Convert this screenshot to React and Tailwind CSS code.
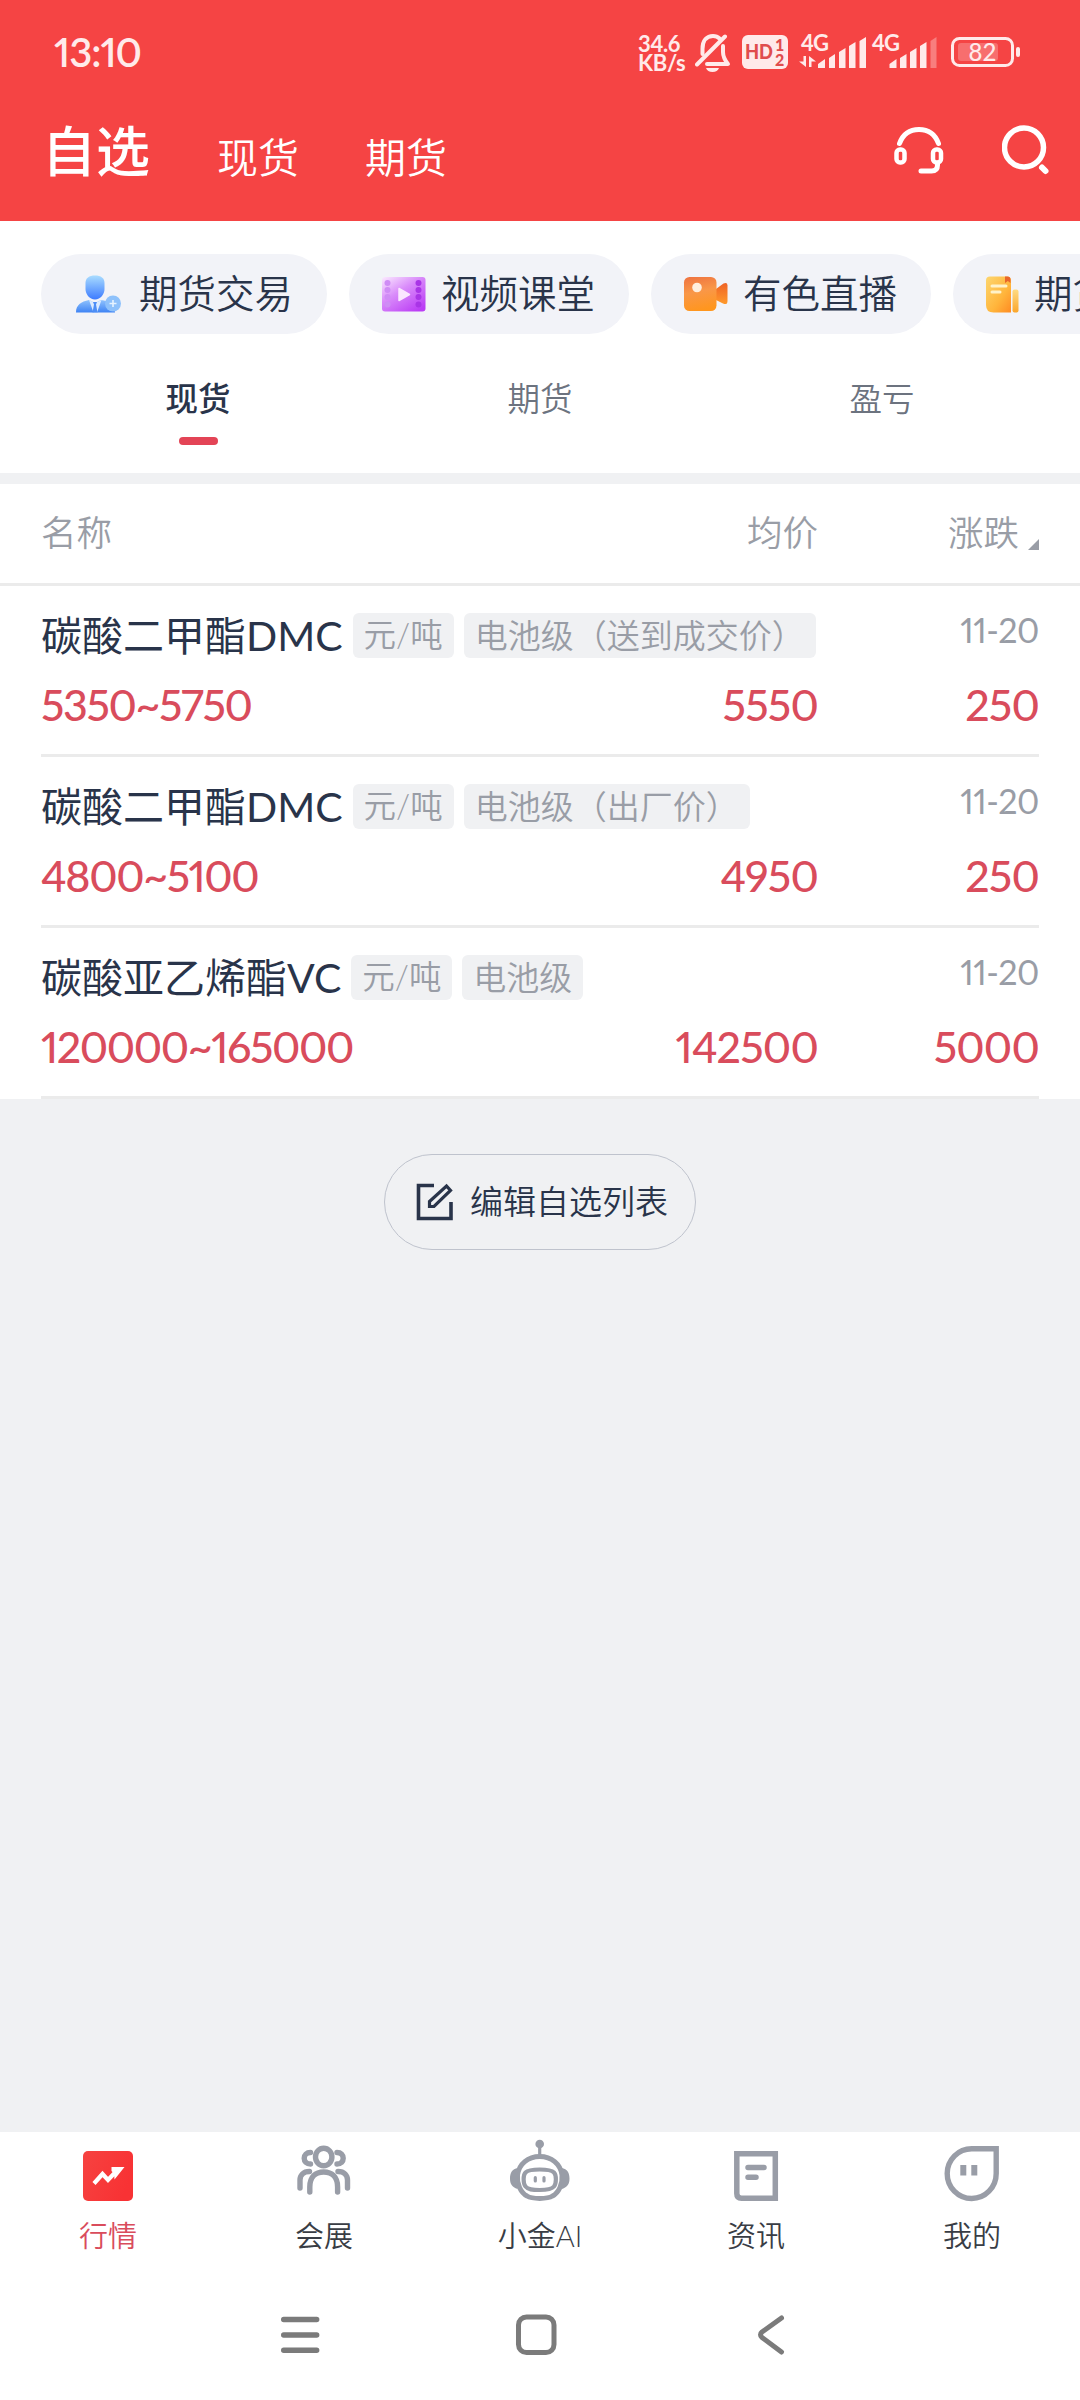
const shortcuts = [
  { label: '期货交易', Icon: TraderIcon, width: 'w-[286px] pl-[34px] gap-[17px]' },
  { label: '视频课堂', Icon: FilmIcon, width: 'w-[280px] pl-[32px] gap-[14px]' },
  { label: '有色直播', Icon: CameraIcon, width: 'w-[280px] pl-[32px] gap-[14px]' },
  { label: '期货资讯', Icon: BookIcon, width: 'w-[280px] pl-[32px] gap-[13px]' },
];

const rows = [
  { name: '碳酸二甲酯DMC', unit: '元/吨', grade: '电池级（送到成交价）', date: '11-20', range: '5350~5750', avg: '5550', change: '250' },
  { name: '碳酸二甲酯DMC', unit: '元/吨', grade: '电池级（出厂价）', date: '11-20', range: '4800~5100', avg: '4950', change: '250' },
  { name: '碳酸亚乙烯酯VC', unit: '元/吨', grade: '电池级', date: '11-20', range: '120000~165000', avg: '142500', change: '5000' },
];

const navItems = [
  { label: '行情', Icon: MarketIcon, active: true },
  { label: '会展', Icon: PeopleIcon },
  { label: '小金AI', Icon: RobotIcon },
  { label: '资讯', Icon: NewsIcon },
  { label: '我的', Icon: MineIcon },
];

function TraderIcon() {
  return (
    <svg className="w-[47px] h-[40px] shrink-0" viewBox="0 0 47 40">
      <defs>
        <linearGradient id="trader-head" x1="0" y1="0" x2="0" y2="1">
          <stop offset="0" stopColor="#a9dcff" />
          <stop offset="1" stopColor="#3d7bff" />
        </linearGradient>
        <linearGradient id="trader-body" x1="0" y1="0" x2="0" y2="1">
          <stop offset="0" stopColor="#8fc2fd" />
          <stop offset="1" stopColor="#3f83f4" />
        </linearGradient>
      </defs>
      <path d="M10.500 9C10.500 4 14 1.500 20 1.500S29.500 4 29.500 9v6c0 5-4 10.500-9.500 10.500S10.500 20 10.500 15z" fill="url(#trader-head)" />
      <path d="M1 38.500C1 31 6 27.500 14 26l6 3 6-3c8 1 13 4 14 12.500z" fill="url(#trader-body)" />
      <path d="M14 26l4.500 12.500h3.500L26.500 26 20 29z" fill="#dcebff" />
      <path d="M18 28h4l-1 2.500 1.500 8h-5l1.500-8z" fill="#4d8ef6" />
      <circle cx="38" cy="29.500" r="8" fill="#8ec1fb" />
      <path d="M38 26v7M34.500 29.500h7" stroke="#e6f3ff" strokeWidth="1.600" />
    </svg>
  );
}

function FilmIcon() {
  return (
    <svg className="w-[46px] h-[40px] shrink-0" viewBox="0 0 46 40">
      <defs>
        <linearGradient id="film-bg" x1="0" y1="0" x2="0.800" y2="1">
          <stop offset="0" stopColor="#fbeaff" />
          <stop offset="0.450" stopColor="#d98bfa" />
          <stop offset="1" stopColor="#bb3df5" />
        </linearGradient>
      </defs>
      <rect x="1" y="3" width="43.500" height="34.500" rx="3" fill="url(#film-bg)" />
      <g fill="#cf8cf5">
        <circle cx="6.500" cy="9" r="3" />
        <circle cx="6.500" cy="16" r="3" />
        <circle cx="6.500" cy="23" r="3" />
        <circle cx="6.500" cy="30.500" r="3" />
      </g>
      <g fill="#a935e6">
        <circle cx="37.500" cy="9" r="3" />
        <circle cx="37.500" cy="16" r="3" />
        <circle cx="37.500" cy="23" r="3" />
        <circle cx="37.500" cy="30.500" r="3" />
      </g>
      <path d="M18 14.500v12l10.500-6z" fill="#fbe6ff" stroke="#fbe6ff" strokeWidth="1.500" strokeLinejoin="round" />
    </svg>
  );
}

function CameraIcon() {
  return (
    <svg className="w-[46px] h-[40px] shrink-0" viewBox="0 0 46 40">
      <defs>
        <linearGradient id="camera-body" x1="0.200" y1="0" x2="0.400" y2="1">
          <stop offset="0" stopColor="#ef7541" />
          <stop offset="0.450" stopColor="#f99748" />
          <stop offset="1" stopColor="#ff961e" />
        </linearGradient>
        <linearGradient id="camera-lens" x1="0" y1="0" x2="0" y2="1">
          <stop offset="0" stopColor="#ef6326" />
          <stop offset="1" stopColor="#ff9a2c" />
        </linearGradient>
      </defs>
      <path d="M33 15l7.500-5.500q4-1.500 4 2V27q0 4.500-4.500 2.500L33 26z" fill="url(#camera-lens)" />
      <rect x="1" y="3" width="32.500" height="34" rx="5.500" fill="url(#camera-body)" />
      <circle cx="14" cy="13.500" r="4.800" fill="#ffeedd" />
    </svg>
  );
}

function BookIcon() {
  return (
    <svg className="w-[36px] h-[40px] shrink-0" viewBox="0 0 36 40">
      <defs>
        <linearGradient id="book-cover" x1="0" y1="0" x2="1" y2="1">
          <stop offset="0" stopColor="#fdd66f" />
          <stop offset="0.600" stopColor="#ffb53c" />
          <stop offset="1" stopColor="#ff8b22" />
        </linearGradient>
        <linearGradient id="book-side" x1="0" y1="0" x2="0" y2="1">
          <stop offset="0" stopColor="#fedb83" />
          <stop offset="1" stopColor="#fba62c" />
        </linearGradient>
      </defs>
      <path d="M5 2.500h17q4 0 4 4V38.500H8.500q-7.500 0-7.500-7.500V6.500q0-4 4-4z" fill="url(#book-cover)" />
      <path d="M20 2.500h2.500q3 0 3 3V9l-2.700-2L20 9z" fill="#e8662c" />
      <path d="M7 12h14M7 18h8" stroke="#fff2c9" strokeWidth="3" strokeLinecap="round" />
      <rect x="27.500" y="15.500" width="6" height="23" rx="2" fill="url(#book-side)" />
    </svg>
  );
}

function MarketIcon() {
  return (
    <svg className="w-[64px] h-[64px]" viewBox="0 0 64 64">
      <defs>
        <linearGradient id="market-bg" x1="0" y1="0" x2="1" y2="0.400">
          <stop offset="0" stopColor="#f64240" />
          <stop offset="1" stopColor="#f83234" />
        </linearGradient>
      </defs>
      <rect x="7" y="10" width="50" height="50" rx="5" fill="url(#market-bg)" />
      <path d="M18 42.500l8.500-9.500 5.500 6 9-9.500" fill="none" stroke="#fff" strokeWidth="4.200" />
      <path d="M35.500 26H48.500l-10 12.500-.5-6-2.500-2.500z" fill="#fff" />
    </svg>
  );
}

function PeopleIcon() {
  return (
    <svg className="w-[64px] h-[64px]" viewBox="0 0 64 64" fill="none" stroke="#999da7" strokeWidth="5.400" strokeLinecap="round">
      <ellipse cx="31.700" cy="16" rx="8.200" ry="8.800" />
      <path d="M17.800 51V46C17.800 36 23.500 31 31.700 31S45.600 36 45.600 46v5" />
      <path d="M18.500 11.500C14.500 11.500 12.200 14 12.200 17.200S14.500 23 18.500 23M45 11.500c4 0 6.200 2.500 6.200 5.700S49 23 45 23" />
      <path d="M17.500 30.500C11 30.500 8 34.500 8 39v8M46 30.500c6.500 0 9.500 4 9.500 8.500v8" />
    </svg>
  );
}

function RobotIcon() {
  return (
    <svg className="w-[64px] h-[64px] overflow-visible" viewBox="0 0 64 64" fill="none" stroke="#999da7">
      <circle cx="31.700" cy="3" r="4.300" fill="#999da7" stroke="none" />
      <path d="M31.700 6v8" strokeWidth="3.200" />
      <path d="M31.700 15.500C20 15.500 11 23 9.500 34 8.500 43 13 52 19 55 24 58.200 39.500 58.200 44.500 55 50.500 52 55 43 54 34 52.500 23 43.500 15.500 31.700 15.500z" strokeWidth="5" />
      <path d="M10 27C4 28 2 32 2 37.500S4 46 9.500 48zM53.500 27C59.500 28 61.500 32 61.500 37.500S59.500 46 54 48z" fill="#999da7" stroke="none" />
      <path d="M31.700 28.500C24 28.500 20 29 17.500 31.500 15 34 15 42.500 17.500 45.500 20 48.500 24 49 31.700 49S43.500 48.500 46 45.500C48.500 42.500 48.500 34 46 31.500 43.500 29 39.500 28.500 31.700 28.500z" strokeWidth="4.200" />
      <path d="M27.300 36.700v3.300M36 36.700v3.300" strokeWidth="3.200" strokeLinecap="round" />
    </svg>
  );
}

function NewsIcon() {
  return (
    <svg className="w-[64px] h-[64px]" viewBox="0 0 64 64" fill="none" stroke="#999da7" strokeWidth="5.500">
      <path d="M12.800 12.700h38.500v44.500H17.500q-4.700 0-4.700-4.700z" />
      <path d="M24 26.500h16M24 36.300h8" strokeLinecap="round" />
    </svg>
  );
}

function MineIcon() {
  return (
    <svg className="w-[64px] h-[64px]" viewBox="0 0 64 64">
      <path d="M32 7.700h24.200V32.500A24.500 24.900 0 1 1 32 7.700z" fill="none" stroke="#999da7" strokeWidth="5.400" />
      <path d="M20.300 24h6v10.500h-6zM31.300 24h6v10.500h-6z" fill="#999da7" />
    </svg>
  );
}

function StatusBar() {
  return (
    <div className="flex h-[104px] pl-[54px] text-[#ffeaea]">
      <div className="w-[584px] pt-[28px] text-[40px] leading-[48px] font-semibold tracking-[-1px] proportional-nums">13:10</div>
      <div className="w-[57px] pt-[35px] text-[22px] leading-[18.500px] font-bold tracking-[-0.300px] whitespace-nowrap">
        34.6<br />KB/s
      </div>
      <svg className="w-[385px] h-[104px] shrink-0" viewBox="695 0 385 104">
        <g fill="none" stroke="#ffeaea" strokeWidth="4" strokeLinecap="round" strokeLinejoin="round">
          <path d="M702.500 54V49C702.500 40 707 36 713 36Q717 36 719.500 38.500" />
          <path d="M723 46v6q0 6 5 12H707" />
          <path d="M697 64.500L725 36.500" />
        </g>
        <path d="M706 68h13q-1.500 4-6.500 4t-6.500-4z" fill="#ffeaea" />
        <rect x="742" y="35" width="46" height="34" rx="6" fill="#ffeaea" />
        <g fill="#e04d4d" fontWeight="900" fontFamily="Lato, sans-serif">
          <text x="745" y="59" fontSize="20" textLength="28" lengthAdjust="spacingAndGlyphs">HD</text>
          <text x="775" y="51" fontSize="16">1</text>
          <text x="775" y="65.500" fontSize="16">2</text>
        </g>
        <g fill="#ffeaea" fontWeight="700" fontFamily="Lato, sans-serif" fontSize="22">
          <text x="801" y="50.500" textLength="28">4G</text>
          <text x="872" y="50.500" textLength="28">4G</text>
        </g>
        <g fill="#ffeaea">
          <path d="M803.500 56h2.500v11l-7-5.500h4.500zM809 67V56l7 5.500h-4.500V67z" />
          <path d="M818 64l7-5v9h-7zM829 58l6-4v14h-6zM839 52l6.500-4v20H839zM849 46l6.500-4v26H849zM859.500 41l6.500-4v31h-6.500z" />
          <path d="M889.500 64l7-5v9h-7zM900 58l6.500-4v14H900zM910 52l6.500-4v20H910zM920 46l6.500-4v26H920z" />
          <path d="M930.500 41l6-4v31h-6z" fillOpacity="0.350" />
          <rect x="958" y="43" width="40" height="18" rx="3" fillOpacity="0.250" />
          <rect x="1016" y="47" width="4" height="10" rx="2" />
        </g>
        <rect x="952.500" y="38.500" width="60" height="27" rx="7" fill="none" stroke="#ffeaea" strokeWidth="3" />
        <text x="968.500" y="61" fill="#ffeaea" fontFamily="Lato, sans-serif" fontSize="24" fontWeight="500" textLength="28">82</text>
      </svg>
    </div>
  );
}

function Header() {
  return (
    <header className="h-[221px] bg-[#f54444]">
      <StatusBar />
      <div className="flex h-[117px] pl-[42px] pr-[30px] text-white">
        <h1 className="w-[175px] pt-[8px] text-[54px] leading-[80px] font-medium">自选</h1>
        <span className="w-[148px] pt-[14px] text-[41px] leading-[80px] font-[350]">现货</span>
        <span className="pt-[14px] text-[41px] leading-[80px] font-[350]">期货</span>
        <div className="ml-auto flex gap-[55px] pt-[19px]">
          <svg className="w-[56px] h-[56px]" viewBox="0 0 56 56" fill="none" stroke="#fff" strokeWidth="5" strokeLinecap="round">
            <path d="M8.500 20.500C12 11 18 6.500 28 6.500S44 11 47.500 20.500" />
            <rect x="5.500" y="26.500" width="8" height="13" rx="3.500" strokeWidth="4.500" />
            <rect x="42" y="26.500" width="8" height="13" rx="3.500" strokeWidth="4.500" />
            <path d="M46.500 40v2q0 6-6 6H30" />
          </svg>
          <svg className="w-[48px] h-[56px]" viewBox="0 0 48 56" fill="none" stroke="#fff" strokeWidth="5.500" strokeLinecap="round">
            <circle cx="22" cy="24.500" r="19.500" />
            <path d="M40 44.500l3.500 3.500" strokeWidth="6" />
          </svg>
        </div>
      </div>
    </header>
  );
}

function Shortcuts() {
  return (
    <div className="flex gap-[22px] pt-[33px] pl-[41px] overflow-hidden">
      {shortcuts.map(({ label, Icon, width }) => (
        <a key={label} href="#" className={`${width} flex h-[80px] shrink-0 items-center rounded-full bg-[#f2f3f8] text-[38.500px] font-[350] whitespace-nowrap text-[#29344a]`}>
          <Icon />
          {label}
        </a>
      ))}
    </div>
  );
}

function Tabs() {
  return (
    <div className="grid grid-cols-3 h-[139px] px-[27px] pt-[40px] text-center text-[32.500px] leading-[50px] font-[350] text-[#6c737f]">
      <div className="flex flex-col items-center text-[#29344a] font-medium">
        现货
        <span className="mt-[13px] h-[8px] w-[39px] rounded-full bg-[#e34456]" />
      </div>
      <div>期货</div>
      <div>盈亏</div>
    </div>
  );
}

function PriceRow({ item }) {
  return (
    <div className="mx-[41px] h-[171px] border-b-[3px] border-[#ebebeb]">
      <div className="flex h-[72px] pt-[27px]">
        <span className="text-[41px] leading-[46px] text-[#29344a]">{item.name}</span>
        <span className="ml-[10px] h-[45px] w-[101px] rounded-[6px] bg-[#f0f1f3] text-center text-[32.500px] leading-[44px] font-[350] text-[#999da6]">{item.unit}</span>
        <span className="ml-[10px] h-[45px] rounded-[6px] bg-[#f0f1f3] px-[11px] text-[33px] leading-[44px] font-[350] text-[#999da6]">{item.grade}</span>
        <span className="ml-auto text-[34px] leading-[34px] tracking-[-0.5px] text-[#999da6] proportional-nums">{item.date}</span>
      </div>
      <div className="flex pt-[21px] text-[43px] leading-[52px] font-medium tracking-[-0.8px] text-[#d94c5c] proportional-nums">
        <span className="w-[500px] tracking-[-1.4px]">{item.range}</span>
        <span className="w-[277px] text-right">{item.avg}</span>
        <span className="flex-1 text-right">{item.change}</span>
      </div>
    </div>
  );
}

function PriceTable() {
  return (
    <section className="bg-white">
      <div className="flex h-[102px] border-b-[3px] border-[#ebebeb] px-[41px] text-[35.500px] leading-[98px] font-[350] text-[#999da6]">
        <span className="w-[500px]">名称</span>
        <span className="w-[277px] text-right">均价</span>
        <span className="flex flex-1 justify-end">
          涨跌
          <svg className="ml-[9px] mt-[55px] h-[11px] w-[11px]" viewBox="0 0 11 11">
            <path d="M11 0v11H0z" fill="#999da6" />
          </svg>
        </span>
      </div>
      {rows.map((item, i) => (
        <PriceRow key={i} item={item} />
      ))}
    </section>
  );
}

function BottomNav() {
  return (
    <nav className="grid h-[148px] grid-cols-5 bg-white text-[29px] font-[350] text-[#393d45]">
      {navItems.map(({ label, Icon, active }) => (
        <a key={label} href="#" className={`flex flex-col items-center pt-[9px] ${active ? 'text-[#d94c5c]' : ''}`}>
          <Icon />
          <span className="mt-[9px] leading-[44px]">{label}</span>
        </a>
      ))}
    </nav>
  );
}

function SystemNav() {
  return (
    <div className="flex h-[120px] items-start gap-[191px] bg-white pt-[31px] pl-[278px]">
      <svg className="w-[46px] h-[46px]" viewBox="0 0 46 46" stroke="#7b7b7b" strokeWidth="5.400" strokeLinecap="round">
        <path d="M5.700 8.500h33M5.700 24h33M5.700 39.200h33" />
      </svg>
      <svg className="-ml-[3px] w-[46px] h-[46px]" viewBox="0 0 46 46" fill="none" stroke="#7b7b7b" strokeWidth="5">
        <rect x="6.500" y="6" width="35.500" height="35.500" rx="8" />
      </svg>
      <svg className="w-[46px] h-[46px]" viewBox="0 0 46 46" fill="none" stroke="#7b7b7b" strokeWidth="5" strokeLinecap="round" strokeLinejoin="round">
        <path d="M32.500 7L13 21q-3 2.500 0 5.500l19.500 14.500" />
      </svg>
    </div>
  );
}

export default function App() {
  return (
    <div className="flex h-[2400px] w-[1080px] flex-col overflow-hidden bg-[#f0f1f3] font-[Lato,'Noto_Sans_CJK_SC',sans-serif]">
      <Header />
      <div className="bg-white">
        <Shortcuts />
        <Tabs />
      </div>
      <div className="mt-[11px]">
        <PriceTable />
      </div>
      <button className="mx-auto mt-[55px] flex h-[96px] w-[312px] items-center rounded-full border border-[#bfc3cd] pl-[30px] text-[33px] font-[350] whitespace-nowrap text-[#29344a]">
        <svg className="mr-[15px] w-[40px] h-[40px] shrink-0" viewBox="0 0 40 40" fill="none" stroke="#29344a" strokeWidth="3.600">
          <path d="M19 3.500H3.500v33h32.500V20" />
          <path d="M14.500 24.500v-5L31.500 4l4 4.500L19 24.500z" strokeWidth="3.200" />
        </svg>
        编辑自选列表
      </button>
      <div className="mt-auto">
        <BottomNav />
        <SystemNav />
      </div>
    </div>
  );
}
